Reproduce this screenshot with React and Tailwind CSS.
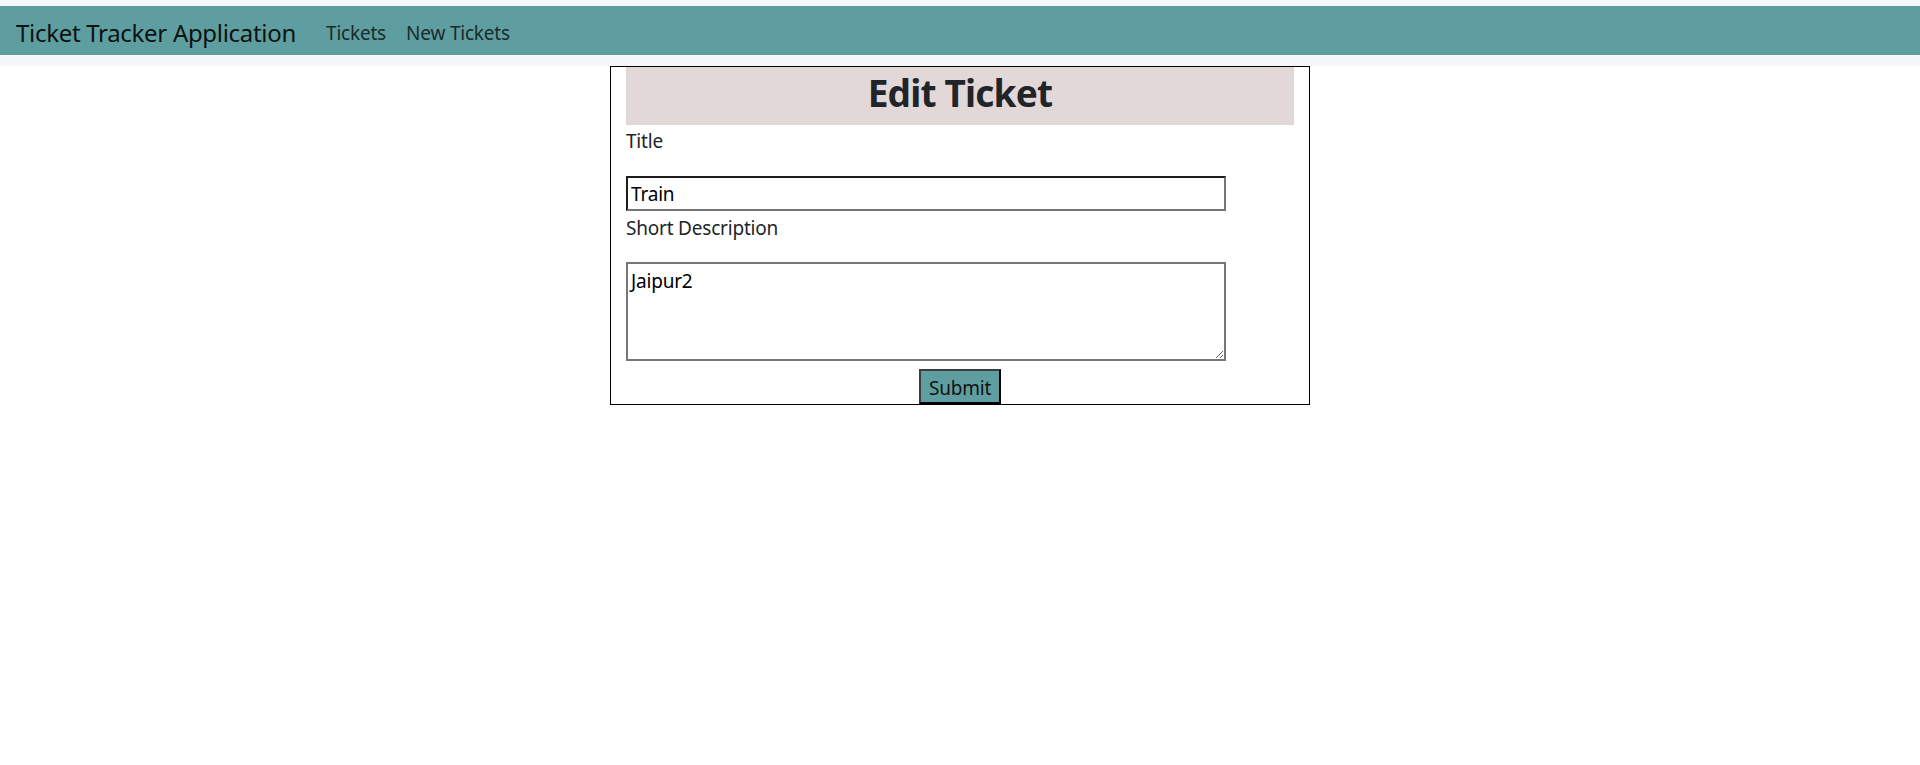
export default function App() {
  return (
    <div className="min-h-screen bg-white text-[#212529]" style={{ fontFamily: '"Noto Sans", "Open Sans", sans-serif' }}>
      {/* top bar */}
      <div className="bg-[#f6f7f9] pt-[6px] pb-[11px]">
        <nav className="h-[49px] bg-[#5f9ea0] flex items-center pl-4 pt-[5px]">
          <a href="#" className="text-[24px] tracking-[-0.3px] leading-none text-[#0b1212] mr-5">Ticket Tracker Application</a>
          <a href="#" className="px-[10px] text-[19px] tracking-[-0.2px] leading-none text-[#1a2b2c]">Tickets</a>
          <a href="#" className="px-[10px] text-[19px] tracking-[-0.2px] leading-none text-[#1a2b2c]">New Tickets</a>
        </nav>
      </div>

      {/* edit form */}
      <div className="flex justify-center">
        <form className="w-[700px] border border-black px-[15px] flex flex-col">
          <h1 className="bg-[#e3d8d8] h-[58px] leading-[52px] text-center text-[37px] tracking-[-0.8px] font-bold text-[#212529]">
            Edit Ticket
          </h1>
          <label className="mt-[1px] h-[30px] leading-[30px] text-[19px] tracking-[-0.2px]">Title</label>
          <input
            type="text"
            defaultValue="Train"
            className="mt-5 w-[600px] h-[35px] px-[3px] text-[19px] tracking-[-0.2px] text-black border-2 border-t-[#1c1c1c] border-l-[#1c1c1c] border-b-[#767676] border-r-[#767676] outline-none"
          />
          <label className="mt-[2px] h-[30px] leading-[30px] text-[19px] tracking-[-0.2px]">Short Description</label>
          <textarea
            defaultValue="Jaipur2"
            className="mt-[19px] w-[600px] h-[99px] px-[3px] pt-[4px] text-[19px] tracking-[-0.2px] leading-[26px] text-black border-2 border-[#767676] outline-none"
          />
          <div className="flex justify-center mt-2">
            <button
              type="button"
              className="w-[82px] h-[35px] pt-[3px] bg-[#5f9ea0] text-[19px] tracking-[-0.2px] leading-none text-[#111] border-2 border-t-[#3c3c3c] border-l-[#3c3c3c] border-b-black border-r-black"
            >
              Submit
            </button>
          </div>
        </form>
      </div>
    </div>
  );
}
